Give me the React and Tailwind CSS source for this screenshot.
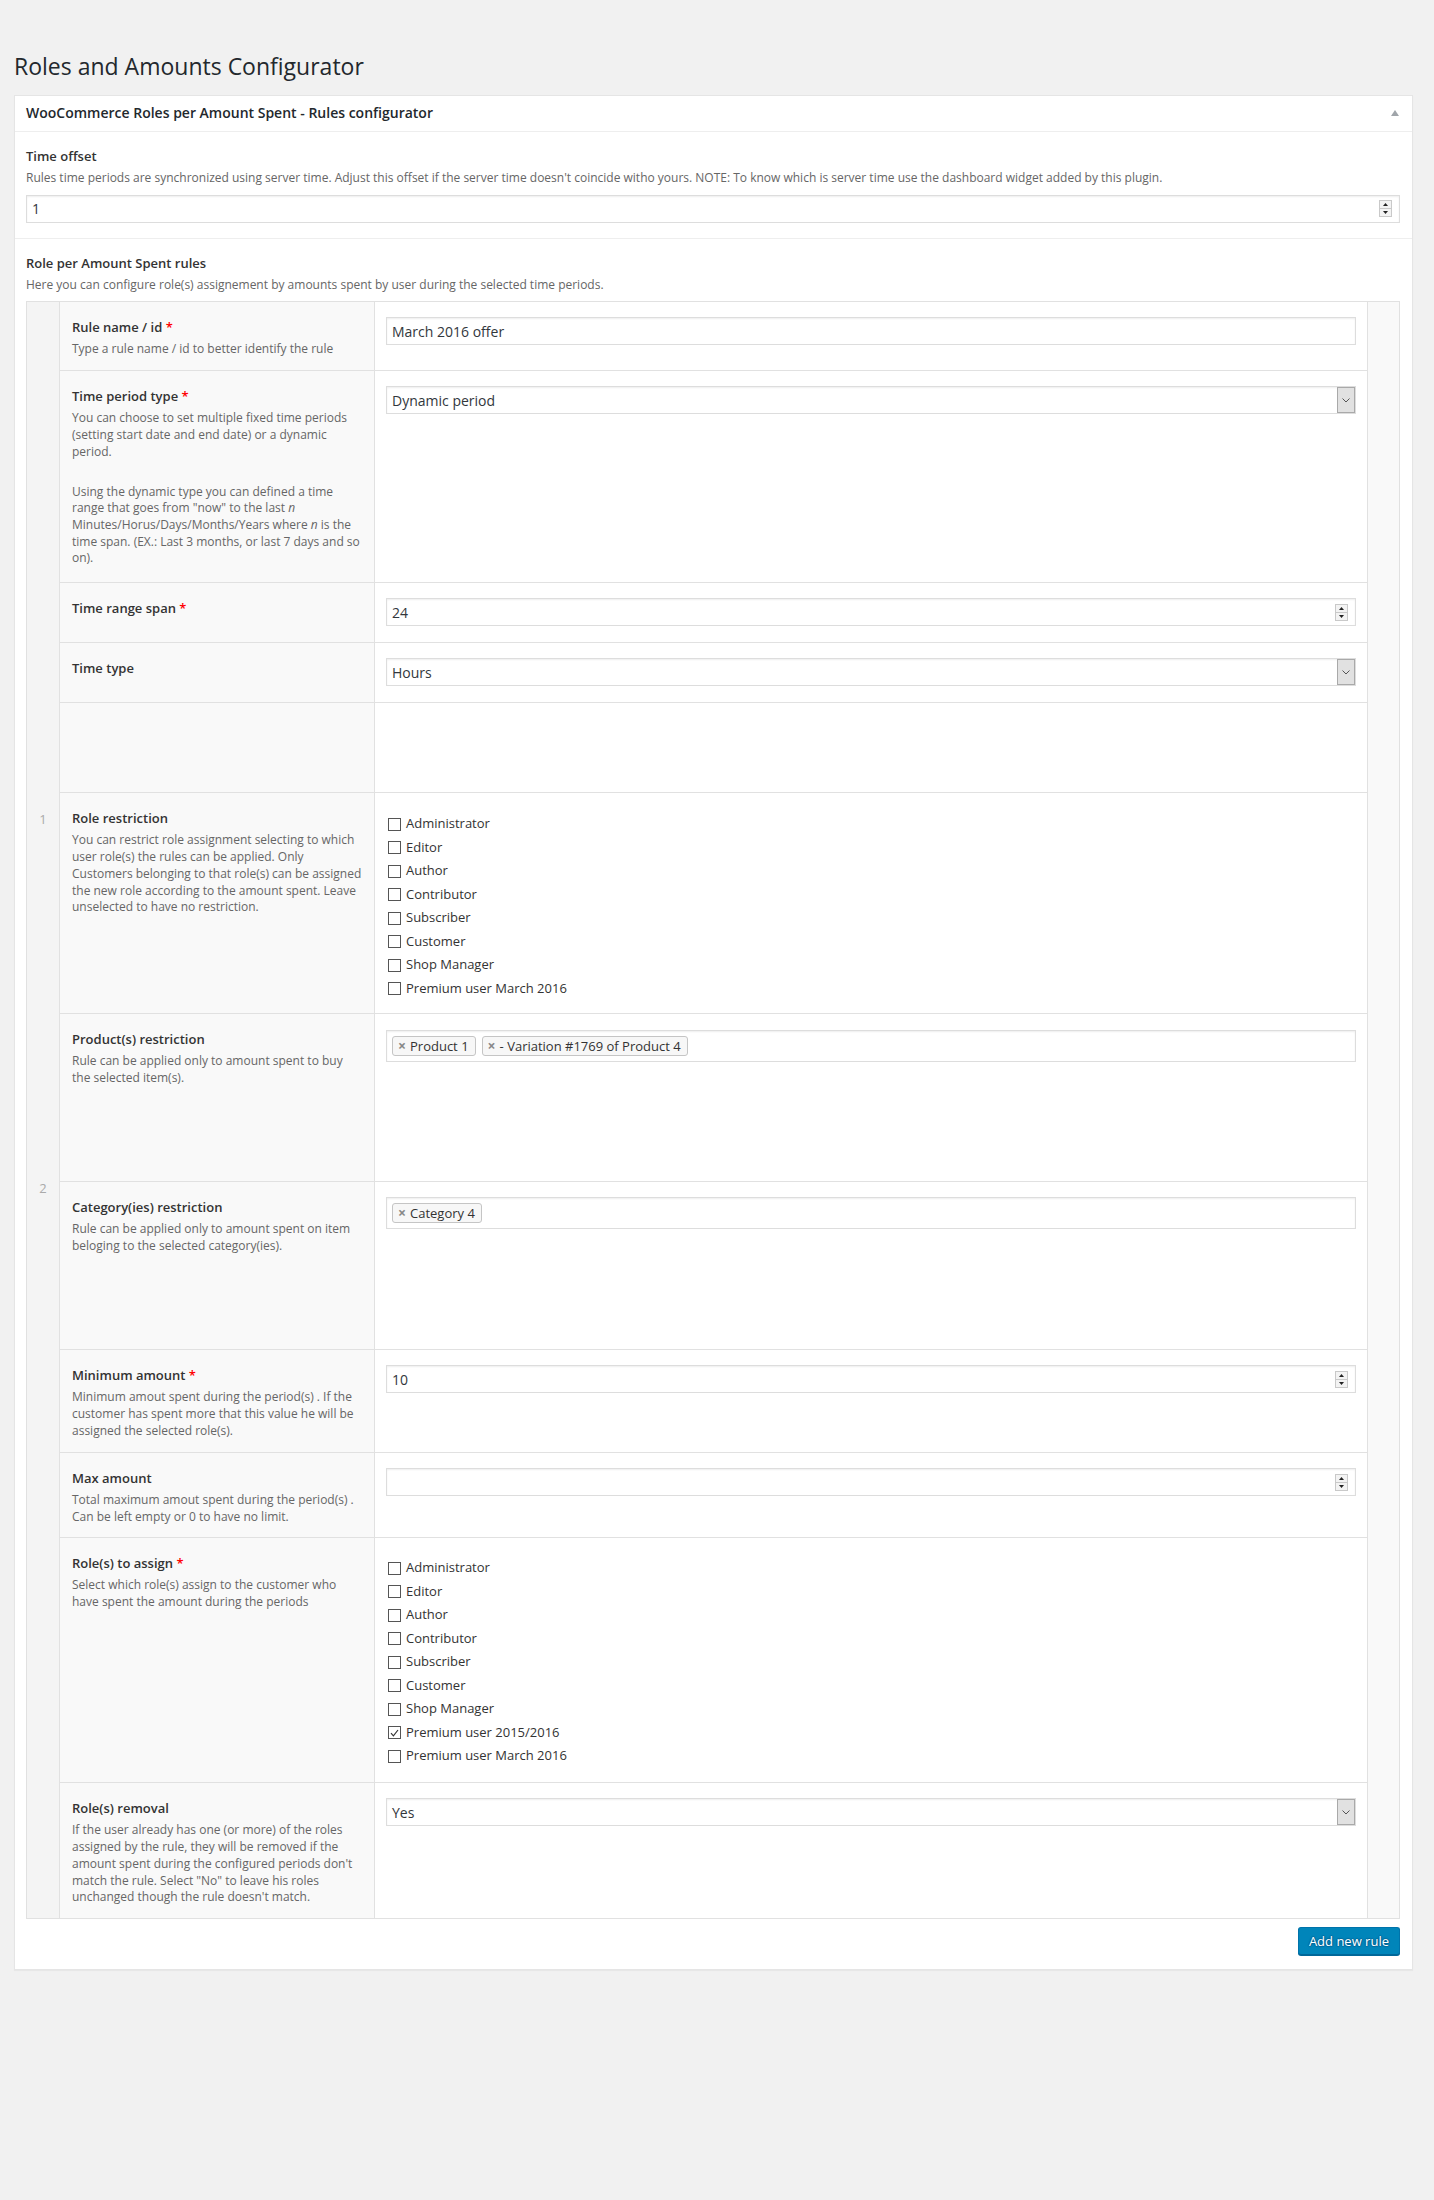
import React from "react";

const baseRoles = ["Administrator", "Editor", "Author", "Contributor", "Subscriber", "Customer", "Shop Manager"];

function Label({ children, req }) {
  return (
    <div className="text-[13px] font-semibold leading-[20px] text-[#333]">
      {children}
      {req && <span className="text-[#f00]"> *</span>}
    </div>
  );
}

function Desc({ children }) {
  return <p className="mt-[4px] text-[12px] leading-[16.7px] text-[#666]">{children}</p>;
}

function Spinner() {
  return (
    <div className="flex h-[17px] w-[13px] shrink-0 flex-col border border-[#c9c9c9] bg-[#f3f3f3]">
      <div className="flex flex-1 items-center justify-center border-b border-[#c9c9c9]">
        <svg width="5" height="3" viewBox="0 0 5 3">
          <path d="M2.5 0L5 3H0z" fill="#222" />
        </svg>
      </div>
      <div className="flex flex-1 items-center justify-center">
        <svg width="5" height="3" viewBox="0 0 5 3">
          <path d="M0 0h5L2.5 3z" fill="#222" />
        </svg>
      </div>
    </div>
  );
}

function TextInput({ value, spinner }) {
  return (
    <div className="flex h-[28px] items-center border border-[#ddd] bg-white pl-[5px] pr-[7px] text-[14px] text-[#32373c] shadow-[inset_0_1px_2px_rgba(0,0,0,0.07)]">
      <span className="flex-1">{value}</span>
      {spinner && <Spinner />}
    </div>
  );
}

function Select({ value }) {
  return (
    <div className="flex h-[28px] items-stretch border border-[#ddd] bg-white pl-[5px] text-[14px] text-[#32373c] shadow-[inset_0_1px_2px_rgba(0,0,0,0.07)]">
      <span className="flex flex-1 items-center">{value}</span>
      <span className="flex w-[18px] items-center justify-center border border-[#a9a9a9] bg-[#e1e1e1]">
        <svg width="8" height="5" viewBox="0 0 8 5">
          <path d="M0.5 0.5L4 4L7.5 0.5" stroke="#555" fill="none" />
        </svg>
      </span>
    </div>
  );
}

function Tags({ items }) {
  return (
    <div className="flex h-[32px] items-start gap-[6px] border border-[#ddd] bg-white pl-[5px] pt-[5px] shadow-[inset_0_1px_2px_rgba(0,0,0,0.07)]">
      {items.map((t) => (
        <span
          key={t}
          className="flex h-[20px] items-center rounded-[3px] border border-[#c5c5c5] bg-[#f7f7f7] pl-[5px] pr-[6px] text-[13px] text-[#333]"
        >
          <span className="mr-[4px] text-[14px] font-bold leading-none text-[#888]">×</span>
          {t}
        </span>
      ))}
    </div>
  );
}

function Check({ label, checked }) {
  return (
    <div className="flex h-[23.5px] items-center gap-[5px] pl-[2px] text-[13px] text-[#333]">
      <span className="flex h-[13px] w-[13px] items-center justify-center border border-[#555] bg-white">
        {checked && (
          <svg width="9" height="8" viewBox="0 0 9 8">
            <path d="M1 4.2L3.4 6.8L8 1" stroke="#333" strokeWidth="1.2" fill="none" />
          </svg>
        )}
      </span>
      {label}
    </div>
  );
}

function Row({ h, label, req, children, field, fieldPad = "pt-[15px]", last }) {
  return (
    <div className={`grid grid-cols-[315px_1fr] ${h} ${last ? "" : "border-b border-[#e1e1e1]"}`}>
      <div className="border-r border-[#e1e1e1] bg-[#f9f9f9] px-[12px] pt-[15px]">
        <Label req={req}>{label}</Label>
        {children}
      </div>
      <div className={`px-[11px] ${fieldPad}`}>{field}</div>
    </div>
  );
}

export default function App() {
  return (
    <div className="min-h-[2200px] bg-[#f1f1f1] pl-[14px] font-['Open_Sans',sans-serif] text-[13px] text-[#444]">
      <h1 className="pt-[51px] text-[23px] font-normal leading-[30px] text-[#23282d]">Roles and Amounts Configurator</h1>

      <div className="mt-[14px] w-[1399px] border border-[#e5e5e5] bg-white shadow-[0_1px_1px_rgba(0,0,0,0.04)]">
        <div className="flex h-[36px] items-center justify-between border-b border-[#eee] pb-[2px] pl-[11px] pr-[13px]">
          <h2 className="text-[14px] font-semibold leading-[19.6px] text-[#23282d]">
            WooCommerce Roles per Amount Spent - Rules configurator
          </h2>
          <svg width="8" height="6" viewBox="0 0 8 6">
            <path d="M4 0L8 6H0z" fill="#a0a5aa" />
          </svg>
        </div>

        {/* time offset */}
        <div className="border-b border-[#eee] pb-[15px] pl-[11px] pr-[12px] pt-[14px]">
          <Label>Time offset</Label>
          <Desc>
            Rules time periods are synchronized using server time. Adjust this offset if the server time doesn't coincide
            witho yours. NOTE: To know which is server time use the dashboard widget added by this plugin.
          </Desc>
          <div className="mt-[8px]">
            <TextInput value="1" spinner />
          </div>
        </div>

        {/* rules repeater */}
        <div className="pb-[14px] pl-[11px] pr-[12px] pt-[14px]">
          <Label>Role per Amount Spent rules</Label>
          <Desc>Here you can configure role(s) assignement by amounts spent by user during the selected time periods.</Desc>

          <div className="mt-[8px] flex border border-[#e1e1e1]">
            <div className="w-[33px] shrink-0 border-r border-[#e1e1e1] bg-[#f4f4f4] text-center text-[13px] leading-[18px] text-[#aaa]">
              <div className="pt-[508px]">1</div>
              <div className="mt-[351px]">2</div>
            </div>

            <div className="min-w-0 flex-1">
              <Row h="h-[69px]" label="Rule name / id" req field={<TextInput value="March 2016 offer" />}>
                <Desc>Type a rule name / id to better identify the rule</Desc>
              </Row>

              <Row h="h-[212px]" label="Time period type" req field={<Select value="Dynamic period" />}>
                <Desc>
                  You can choose to set multiple fixed time periods (setting start date and end date) or a dynamic period.
                </Desc>
                <p className="mt-[23px] text-[12px] leading-[16.7px] text-[#666]">
                  Using the dynamic type you can defined a time range that goes from "now" to the last <i>n</i>{" "}
                  Minutes/Horus/Days/Months/Years where <i>n</i> is the time span. (EX.: Last 3 months, or last 7 days and
                  so on).
                </p>
              </Row>

              <Row h="h-[60px]" label="Time range span" req field={<TextInput value="24" spinner />} />

              <Row h="h-[60px]" label="Time type" field={<Select value="Hours" />} />

              <div className="grid h-[90px] grid-cols-[315px_1fr] border-b border-[#e1e1e1]">
                <div className="border-r border-[#e1e1e1] bg-[#f9f9f9]" />
                <div />
              </div>

              <Row
                h="h-[221px]"
                label="Role restriction"
                fieldPad="pt-[19px]"
                field={
                  <div>
                    {[...baseRoles, "Premium user March 2016"].map((r) => (
                      <Check key={r} label={r} />
                    ))}
                  </div>
                }
              >
                <Desc>
                  You can restrict role assignment selecting to which user role(s) the rules can be applied. Only Customers
                  belonging to that role(s) can be assigned the new role according to the amount spent. Leave unselected to
                  have no restriction.
                </Desc>
              </Row>

              <Row
                h="h-[168px]"
                label="Product(s) restriction"
                fieldPad="pt-[16px]"
                field={<Tags items={["Product 1", "- Variation #1769 of Product 4"]} />}
              >
                <Desc>Rule can be applied only to amount spent to buy the selected item(s).</Desc>
              </Row>

              <Row h="h-[168px]" label="Category(ies) restriction" field={<Tags items={["Category 4"]} />}>
                <Desc>Rule can be applied only to amount spent on item beloging to the selected category(ies).</Desc>
              </Row>

              <Row h="h-[103px]" label="Minimum amount" req field={<TextInput value="10" spinner />}>
                <Desc>
                  Minimum amout spent during the period(s) . If the customer has spent more that this value he will be
                  assigned the selected role(s).
                </Desc>
              </Row>

              <Row h="h-[85px]" label="Max amount" field={<TextInput value="" spinner />}>
                <Desc>Total maximum amout spent during the period(s) . Can be left empty or 0 to have no limit.</Desc>
              </Row>

              <Row
                h="h-[245px]"
                label="Role(s) to assign"
                req
                fieldPad="pt-[18px]"
                field={
                  <div>
                    {baseRoles.map((r) => (
                      <Check key={r} label={r} />
                    ))}
                    <Check label="Premium user 2015/2016" checked />
                    <Check label="Premium user March 2016" />
                  </div>
                }
              >
                <Desc>Select which role(s) assign to the customer who have spent the amount during the periods</Desc>
              </Row>

              <Row h="h-[135px]" label="Role(s) removal" last field={<Select value="Yes" />}>
                <Desc>
                  If the user already has one (or more) of the roles assigned by the rule, they will be removed if the
                  amount spent during the configured periods don't match the rule. Select "No" to leave his roles
                  unchanged though the rule doesn't match.
                </Desc>
              </Row>
            </div>

            <div className="w-[32px] shrink-0 border-l border-[#e1e1e1] bg-[#f9f9f9]" />
          </div>

          <div className="mt-[8px] flex justify-end">
            <button className="h-[28px] rounded-[3px] border border-[#0073aa] border-b-[#006799] bg-[#0085ba] px-[10px] text-[13px] leading-[26px] text-white shadow-[0_1px_0_#006799] [text-shadow:0_-1px_1px_#006799,1px_0_1px_#006799,0_1px_1px_#006799,-1px_0_1px_#006799]">
              Add new rule
            </button>
          </div>
        </div>
      </div>
    </div>
  );
}
